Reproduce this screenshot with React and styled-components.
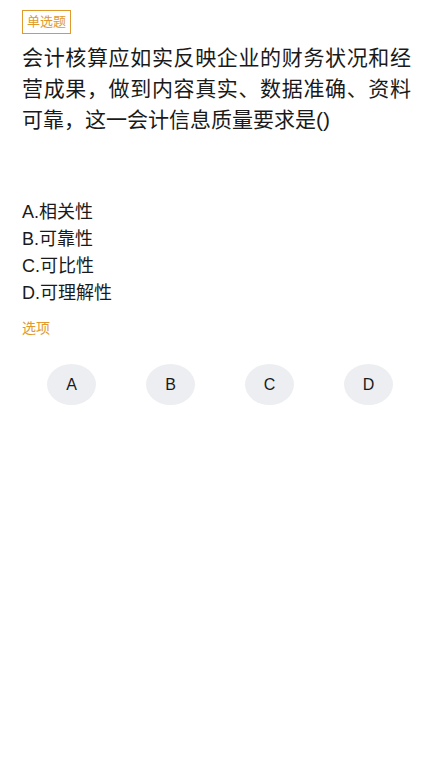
import styled, { createGlobalStyle } from "styled-components";

const GlobalStyle = createGlobalStyle`
  body {
    margin: 0;
    background: #ffffff;
    font-family: "Liberation Sans", "Noto Sans CJK SC", sans-serif;
    color: #222222;
  }
`;

const Page = styled.div`
  padding: 10px 21px 0 22px;
`;

const Tag = styled.span`
  display: inline-block;
  border: 1px solid #e09a2c;
  color: #e09a2c;
  font-size: 13px;
  line-height: 18px;
  padding: 2px 4px;
`;

const Question = styled.p`
  margin: 8px 0 0;
  font-size: 21px;
  line-height: 31px;
  text-align: justify;
  color: #1a1a1a;
`;

const NoWrap = styled.span`
  white-space: nowrap;
`;

const OptionList = styled.ul`
  list-style: none;
  margin: 64px 0 0;
  padding: 0;
`;

const Option = styled.li`
  font-size: 18px;
  line-height: 27px;
  color: #1a1a1a;
`;

const Label = styled.div`
  margin-top: 11px;
  font-size: 14px;
  line-height: 20px;
  color: #e09a2c;
`;

const Choices = styled.div`
  display: grid;
  grid-template-columns: repeat(4, 99px);
  justify-items: center;
  margin-top: 26px;
`;

const Choice = styled.button`
  width: 49px;
  height: 41px;
  border: none;
  border-radius: 50%;
  background: #edeef1;
  color: #1a1a1a;
  font-family: "Liberation Sans", sans-serif;
  font-size: 16px;
  padding: 0;
`;

const options = [
  { key: "A", text: "相关性" },
  { key: "B", text: "可靠性" },
  { key: "C", text: "可比性" },
  { key: "D", text: "可理解性" },
];

export default function App() {
  return (
    <>
      <GlobalStyle />
      <Page>
        <Tag>单选题</Tag>
        <Question>
          会计核算应如实反映企业的财务状况和经营成果，做到内容真实、数据准确、资料
          <NoWrap>可靠，</NoWrap>这一会计信息质量要求是()
        </Question>
        <OptionList>
          {options.map((o) => (
            <Option key={o.key}>
              {o.key}.{o.text}
            </Option>
          ))}
        </OptionList>
        <Label>选项</Label>
        <Choices>
          {options.map((o) => (
            <Choice key={o.key}>{o.key}</Choice>
          ))}
        </Choices>
      </Page>
    </>
  );
}
